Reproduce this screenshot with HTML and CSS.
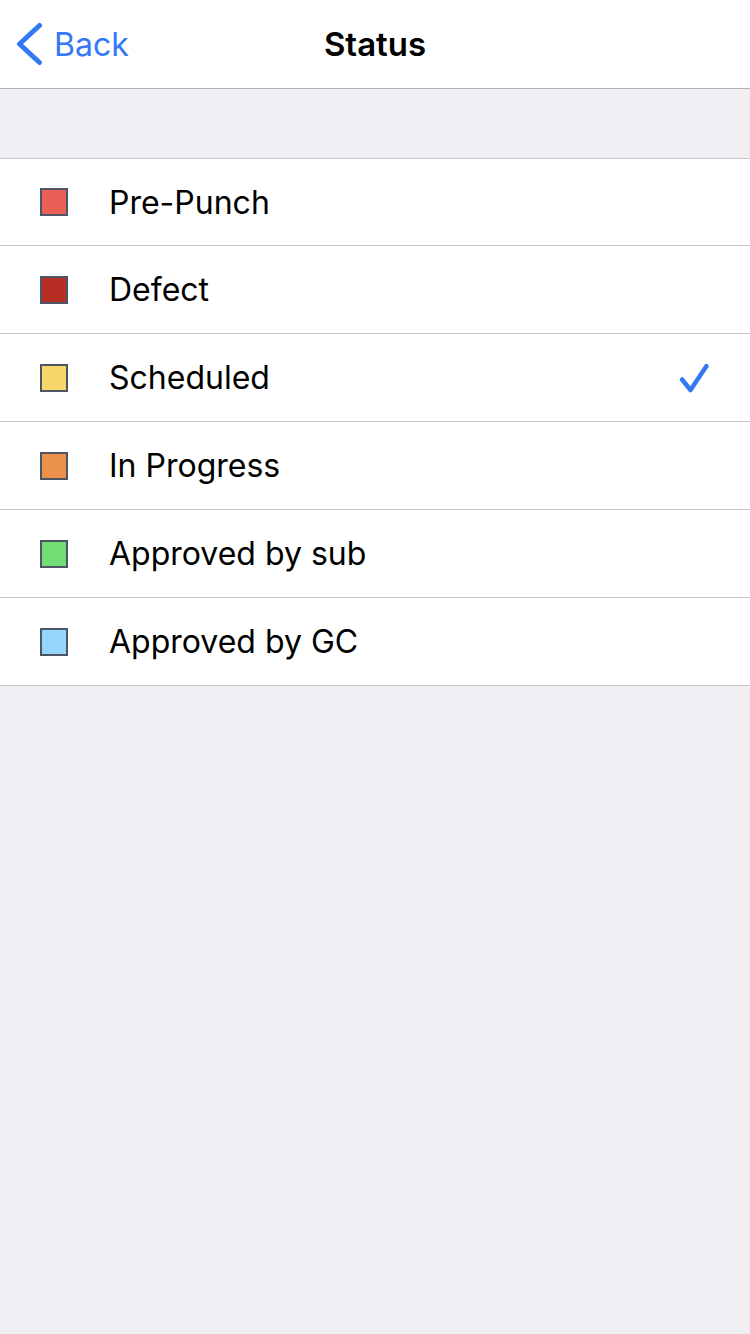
FILE: index.html
```html
<!DOCTYPE html>
<html>
<head>
<meta charset="utf-8">
<link rel="stylesheet" href="styles.css">
</head>
<body>
<header class="nav">
  <div class="back">
    <svg class="chev" width="28" height="46" viewBox="0 0 28 46"><path d="M23.5 4.5 L3.5 23 L23.5 41.5" fill="none" stroke="#3478f6" stroke-width="5" stroke-linecap="round" stroke-linejoin="round"/></svg>
    <span>Back</span>
  </div>
  <div class="title">Status</div>
</header>
<div class="spacer"></div>
<ul class="list">
  <li class="row first"><span class="sw" style="background:#eb5e55"></span><span class="label">Pre-Punch</span></li>
  <li class="row"><span class="sw" style="background:#b82e25"></span><span class="label">Defect</span></li>
  <li class="row"><span class="sw" style="background:#f5d669"></span><span class="label">Scheduled</span>
    <svg class="check" width="32" height="32" viewBox="0 0 32 32"><path d="M4 17.5 L12.5 28 L28.5 4" fill="none" stroke="#3478f6" stroke-width="4.5" stroke-linecap="round" stroke-linejoin="round"/></svg>
  </li>
  <li class="row"><span class="sw" style="background:#ec914a"></span><span class="label">In Progress</span></li>
  <li class="row"><span class="sw" style="background:#74dc74"></span><span class="label">Approved by sub</span></li>
  <li class="row"><span class="sw" style="background:#95d4fb"></span><span class="label">Approved by GC</span></li>
</ul>
</body>
</html>
```
FILE: styles.css
```css
html, body {
  margin: 0;
  padding: 0;
  background: #efeff4;
  font-family: Inter, "Noto Sans", sans-serif;
}
.nav {
  height: 89px;
  background: #ffffff;
  border-bottom: 1px solid #b2b2b2;
  position: relative;
  display: flex;
  align-items: center;
  box-sizing: border-box;
}
.back {
  display: flex;
  align-items: center;
  padding-left: 16px;
  color: #3478f6;
  font-size: 32px;
  gap: 10px;
}
.chev { display: block; }
.title {
  position: absolute;
  left: 0;
  right: 0;
  top: 0;
  height: 88px;
  display: flex;
  align-items: center;
  justify-content: center;
  font-size: 33px;
  font-weight: 600;
  color: #000;
  pointer-events: none;
}
.spacer {
  height: 70px;
  box-sizing: border-box;
  border-bottom: 1px solid #c8c7cc;
}
.list {
  list-style: none;
  margin: 0;
  padding: 0;
  background: #fff;
}
.row {
  height: 88px;
  box-sizing: border-box;
  border-bottom: 1px solid #c8c7cc;
  display: flex;
  align-items: center;
  padding-left: 40px;
  padding-right: 40px;
}
.row.first {
  height: 87px;
}
.sw {
  width: 28px;
  height: 28px;
  box-sizing: border-box;
  border: 2px solid #4b5563;
  flex: none;
}
.label {
  margin-left: 41px;
  font-size: 32px;
  color: #000;
  flex: 1;
}
.check { display: block; }
```
